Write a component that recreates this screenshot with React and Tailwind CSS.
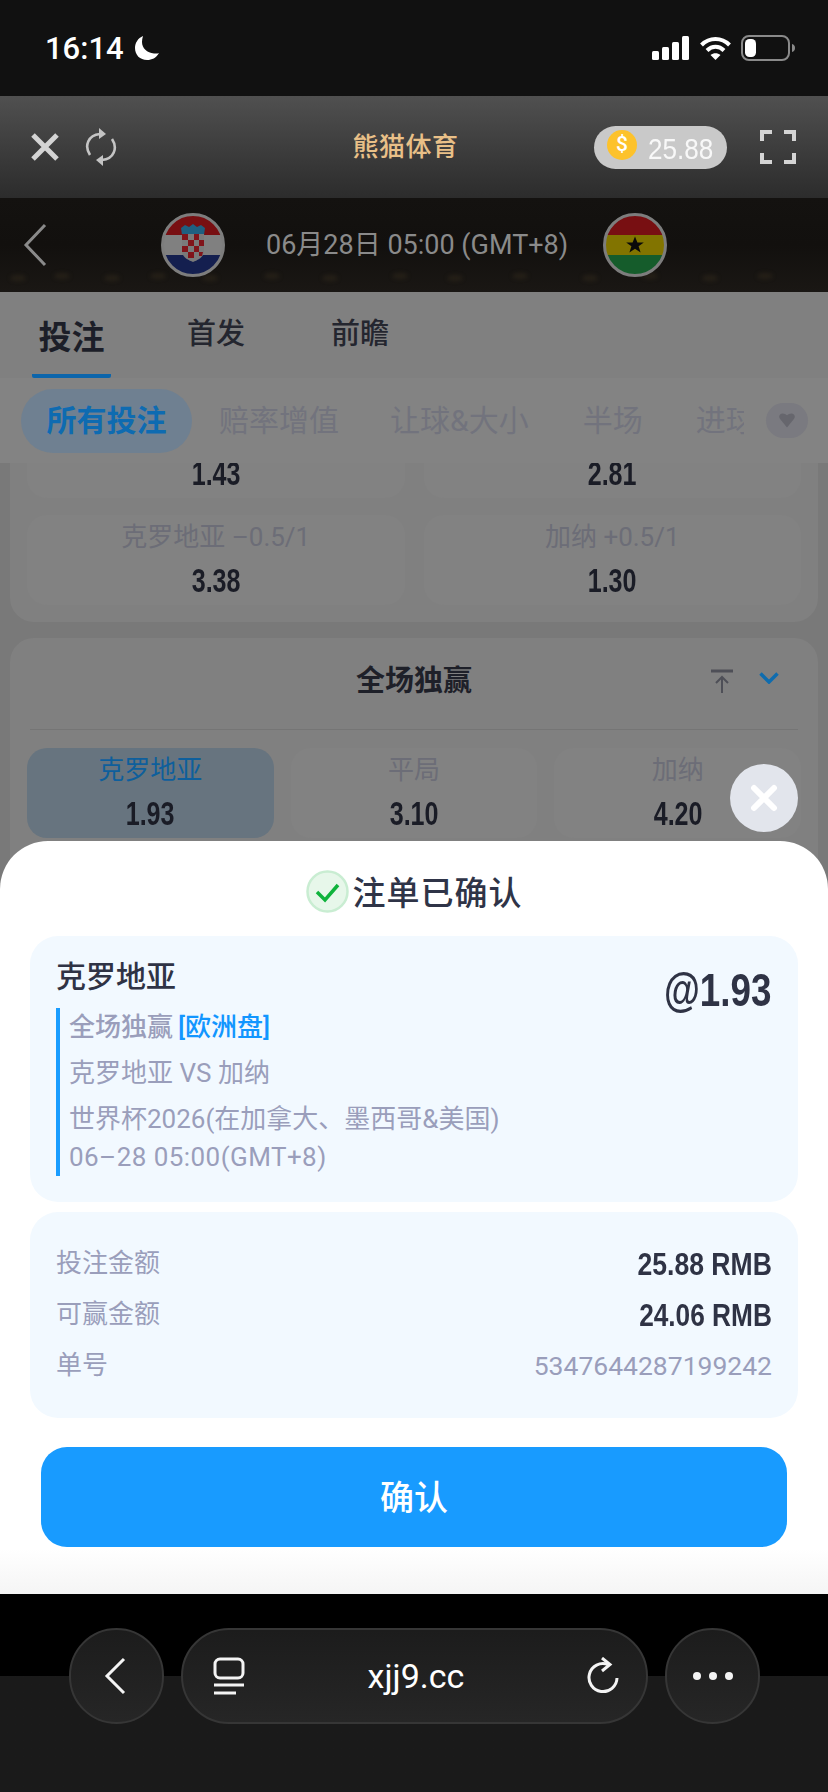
import React from 'react';

const num = "inline-block font-bold font-['Liberation_Sans','Roboto',sans-serif] whitespace-nowrap";

const StatusBar = () => (
  <div className="h-[96px] bg-[#111111] flex items-center justify-between pl-[45px] pr-[33px] text-white">
    <div className="flex items-center gap-[10px]">
      <span className="text-[31px] font-medium leading-none">16:14</span>
      <svg width="26" height="26" viewBox="0 0 26 26" fill="#fff">
        <path d="M9 1C4 3 1 8 1 13c0 7 5 12 12 12 5 0 9-2 12-7-1 .5-3 .8-5 .5C13 18 8 13 8 7c0-2 .4-4 1-6z" />
      </svg>
    </div>
    <div className="flex items-center">
      <svg width="38" height="24" viewBox="0 0 38 24" fill="#fff">
        <rect x="0" y="15" width="7" height="9" rx="1.5" />
        <rect x="10" y="11" width="7" height="13" rx="1.5" />
        <rect x="20" y="6" width="7" height="18" rx="1.5" />
        <rect x="30" y="0" width="7" height="24" rx="1.5" />
      </svg>
      <svg className="ml-[9px]" width="33" height="25" viewBox="0 0 32 25" fill="none" stroke="#fff" strokeWidth="4">
        <path d="M2 9c8-8 20-8 28 0" />
        <path d="M7.500 14.500c5-5 12-5 17 0" />
        <path d="M16 24l-5-5c3-2.500 7-2.500 10 0z" fill="#fff" stroke="none" />
      </svg>
      <svg className="ml-[9px]" width="54" height="26" viewBox="0 0 54 26" fill="none">
        <rect x="1" y="1" width="47" height="24" rx="7" stroke="#8a8a8a" strokeWidth="2" />
        <rect x="4" y="4" width="11" height="18" rx="4.500" fill="#fff" />
        <path d="M51 9c2 .5 3 2 3 4s-1 3.500-3 4z" fill="#8a8a8a" />
      </svg>
    </div>
  </div>
);

const AppHeader = () => (
  <div className="h-[102px] bg-gradient-to-b from-[#505050] to-[#2c2c2c] flex items-center pl-[31px] pr-[32px]">
    <svg width="28" height="28" viewBox="0 0 28 28" stroke="#d4d4d4" strokeWidth="5" fill="none">
      <path d="M2 2l24 24M26 2L2 26" />
    </svg>
    <svg className="ml-[26px]" width="32" height="40" viewBox="0 0 32 40" fill="none" stroke="#c4c4c4" strokeWidth="2.600">
      <path d="M5 28C-1 19 3 8 15 7" />
      <path d="M14 1l7 6-7 5z" fill="#c4c4c4" stroke="none" />
      <path d="M27 12c6 9 2 20-10 21" />
      <path d="M18 28l-7 5 7 6z" fill="#c4c4c4" stroke="none" />
    </svg>
    <div className="flex-1 text-center text-[26px] font-medium text-[#e9c088] tracking-[0.5px] pl-[100px]">熊猫体育</div>
    <div className="w-[133px] h-[43px] rounded-full bg-[#c9c9c9] flex items-center pl-[13px]">
      <div className="w-[30px] h-[30px] rounded-full bg-[#fdc22b] flex items-center justify-center text-white text-[21px] font-medium leading-none -mt-[5px]">$</div>
      <span className="ml-[11px] inline-block origin-left scale-x-[0.87] text-[30px] leading-none text-[#f8f8f8] font-['Liberation_Sans','Roboto',sans-serif] mt-[4px]">25.88</span>
    </div>
    <svg className="ml-[33px]" width="36" height="34" viewBox="0 0 36 34" fill="none" stroke="#d4d4d4" strokeWidth="4">
      <path d="M2 11V2h10M24 2h10v9M34 23v9H24M12 32H2v-9" />
    </svg>
  </div>
);

const CroatiaFlag = () => (
  <svg width="64" height="64" viewBox="0 0 64 64" className="shrink-0">
    <clipPath id="hr"><circle cx="32" cy="32" r="30" /></clipPath>
    <g clipPath="url(#hr)">
      <rect width="64" height="22" fill="#780f12" />
      <rect y="22" width="64" height="20" fill="#808080" />
      <rect y="42" width="64" height="22" fill="#141f4f" />
      <path d="M20 15l4-3 4 2 4-3 4 3 4-2 4 3-1 7H21z" fill="#1f5f80" />
      <path d="M21 21h22v17c0 6-6 9-11 11-5-2-11-5-11-11z" fill="#7a7a7a" />
      <path d="M21 21h6v6h-6zM33 21h5v6h-5zM27 27h6v6h-6zM38 27h5v6h-5zM21 33h6v6h-6zM33 33h5v6h-5zM27 39h6v6h-6zM38 39h4l-1 4h-3z" fill="#80141a" />
    </g>
    <circle cx="32" cy="32" r="30.500" fill="none" stroke="#7d7d7d" strokeWidth="3" />
  </svg>
);

const GhanaFlag = () => (
  <svg width="64" height="64" viewBox="0 0 64 64" className="shrink-0">
    <clipPath id="gh"><circle cx="32" cy="32" r="30" /></clipPath>
    <g clipPath="url(#gh)">
      <rect width="64" height="22" fill="#780f12" />
      <rect y="22" width="64" height="20" fill="#827400" />
      <rect y="42" width="64" height="22" fill="#155c2b" />
    </g>
    <path d="M32 23.500l2.400 6h6.400l-5.200 3.800 2 6.200-5.600-3.800-5.600 3.800 2-6.200-5.200-3.800h6.400z" fill="#0a0a0a" />
    <circle cx="32" cy="32" r="30.500" fill="none" stroke="#7d7d7d" strokeWidth="3" />
  </svg>
);

// blurred stadium lights behind the match row
const lights = [18, 62, 112, 158, 210, 272, 330, 400, 455, 520, 590, 650, 710, 765];

const MatchBar = () => (
  <div className="relative h-[94px] bg-gradient-to-b from-[#141210] via-[#12100e] to-[#1a1714] flex items-center pl-[23px]">
    <svg className="absolute inset-0 blur-[2px]" width="828" height="94" viewBox="0 0 828 94">
      {lights.map((x, i) => (
        <ellipse key={x} cx={x} cy={i % 2 ? 78 : 80} rx="8" ry="3" fill="#4a3d26" opacity="0.3" />
      ))}
    </svg>
    <svg className="relative" width="24" height="44" viewBox="0 0 24 44" fill="none" stroke="#8a8a8a" strokeWidth="3">
      <path d="M22 2L3 22l19 20" />
    </svg>
    <div className="relative ml-[114px]"><CroatiaFlag /></div>
    <span className="relative ml-[41px] w-[337px] text-[27px] text-[#8a8a8a] whitespace-nowrap">06月28日 05:00 (GMT+8)</span>
    <div className="relative"><GhanaFlag /></div>
  </div>
);

const Tabs = () => (
  <div className="h-[86px] bg-[#808080] flex pl-[32px] relative">
    <div className="w-[79px] h-[86px] border-b-[4px] border-[#0c65ab] rounded-b-[2px] flex justify-center pt-[24px]">
      <span className="text-[33px] leading-[44px] font-bold text-[#1c1e28]">投注</span>
    </div>
    <span className="ml-[76px] mt-[20px] text-[29px] leading-[44px] font-medium text-[#24262f]">首发</span>
    <span className="ml-[86px] mt-[20px] text-[29px] leading-[44px] font-medium text-[#24262f]">前瞻</span>
  </div>
);

const Filters = () => (
  <div className="h-[85px] bg-[#838383] flex items-center pl-[21px] text-[30px] text-[#72737d]">
    <div className="w-[171px] h-[64px] rounded-[32px] bg-[#6f8091] flex items-center justify-center font-bold text-[#0e6bb1]">所有投注</div>
    <span className="ml-[27px]">赔率增值</span>
    <span className="ml-[51px]">让球&大小</span>
    <span className="ml-[54px]">半场</span>
    <span className="ml-[53px] w-[48px] overflow-hidden whitespace-nowrap">进球</span>
    <div className="ml-[22px] w-[42px] h-[35px] rounded-full bg-[#7a7a80] flex items-center justify-center">
      <svg width="16" height="15" viewBox="0 0 18 16" fill="#66666d">
        <path d="M9 16L1 6C-1 3 1 0 4 0c2 0 4 1 5 2 1-1 3-2 5-2 3 0 5 3 3 6z" />
      </svg>
    </div>
  </div>
);

const Odds = ({ label, value, active = false }) => (
  <div className={`h-[90px] rounded-[20px] flex flex-col items-center ${active ? 'bg-[#67747f]' : 'bg-[#828282]'}`}>
    <div className={`h-[44px] flex items-center text-[26px] ${active ? 'text-[#0e5f9c]' : 'text-[#6c6d77]'}`}>{label}</div>
    <div className="h-[44px] flex items-center text-[33px] text-[#1a1c26]">
      <span className={`${num} scale-x-[0.76]`}>{value}</span>
    </div>
  </div>
);

const Content = () => (
  <div className="flex-1 bg-[#797979] overflow-hidden">
    <div className="-mt-[73px] mx-[10px] h-[232px] rounded-[24px] bg-[#808080] px-[17px] pt-[18px]">
      <div className="grid grid-cols-2 gap-x-[19px] gap-y-[17px]">
        <Odds label="" value="1.43" />
        <Odds label="" value="2.81" />
        <Odds label="克罗地亚 –0.5/1" value="3.38" />
        <Odds label="加纳 +0.5/1" value="1.30" />
      </div>
    </div>
    <div className="mt-[16px] mx-[10px] h-[300px] rounded-[24px] bg-[#808080] px-[17px]">
      <div className="relative h-[92px] mx-[3px] border-b border-[#757575] flex items-start justify-center pt-[22px]">
        <span className="text-[29px] leading-[42px] font-bold text-[#1e2029]">全场独赢</span>
        <div className="absolute right-[19px] top-[31px] flex items-start gap-[26px]">
          <svg width="22" height="24" viewBox="0 0 22 24" fill="none" stroke="#4e4f57" strokeWidth="2">
            <path d="M0 2h22" strokeWidth="3" />
            <path d="M11 24V8M5 14l6-6 6 6" />
          </svg>
          <svg className="mt-[3px]" width="20" height="12" viewBox="0 0 20 12" fill="none" stroke="#0f6cae" strokeWidth="3.500">
            <path d="M1.500 1.500L10 10l8.500-8.500" />
          </svg>
        </div>
      </div>
      <div className="mt-[18px] grid grid-cols-3 gap-x-[17px]">
        <Odds label="克罗地亚" value="1.93" active />
        <Odds label="平局" value="3.10" />
        <Odds label="加纳" value="4.20" />
      </div>
    </div>
  </div>
);

const Row = ({ label, children }) => (
  <div className="h-[51px] flex items-center justify-between text-[26px] text-[#9a9ebb]">
    <span>{label}</span>
    {children}
  </div>
);

const Sheet = () => (
  <div className="absolute left-0 right-0 bottom-0 rounded-t-[48px] bg-gradient-to-b from-white from-[94%] to-[#f5f5f5] pt-[29px] pb-[47px]">
    <div className="h-[43px] flex items-center justify-center gap-[4px]">
      <svg width="43" height="43" viewBox="0 0 43 43" fill="none">
        <circle cx="21.500" cy="21.500" r="20" fill="#e7f7ea" stroke="#c9edd2" strokeWidth="2.500" />
        <path d="M11 22l8 8 13-15" stroke="#0fb33c" strokeWidth="3.500" />
      </svg>
      <span className="text-[33px] font-medium text-[#2f3447] leading-none tracking-[1px] mt-[3px]">注单已确认</span>
    </div>
    <div className="mt-[23px] mx-[30px] h-[266px] rounded-[28px] bg-[#f2f9ff] flex justify-between pl-[26px] pr-[27px] pt-[25px]">
      <div>
        <div className="h-[30px] flex items-center text-[30px] font-medium text-[#2f3345]">克罗地亚</div>
        <div className="mt-[17px] h-[168px] border-l-[4px] border-[#1a9dff] pl-[9px] text-[26px] text-[#9a9ebb]">
          <div className="h-[38px] flex items-center font-medium">全场独赢<span className="ml-[5px] text-[#1296ff]">[欧洲盘]</span></div>
          <div className="mt-[8px] h-[38px] flex items-center">克罗地亚 VS 加纳</div>
          <div className="mt-[8px] h-[38px] flex items-center">世界杯2026(在加拿大、墨西哥&美国)</div>
          <div className="h-[38px] flex items-center tracking-[0.45px]">06–28 05:00(GMT+8)</div>
        </div>
      </div>
      <div className={`text-[46px] leading-none text-[#2f3345] mt-[6px] origin-right scale-x-[0.8] ${num}`}>@1.93</div>
    </div>
    <div className="mt-[10px] mx-[30px] h-[206px] rounded-[28px] bg-[#f2f9ff] px-[26px] pt-[26px]">
      <Row label="投注金额"><span className={`text-[32px] text-[#2f3345] origin-right scale-x-[0.83] ${num}`}>25.88 RMB</span></Row>
      <Row label="可赢金额"><span className={`text-[32px] text-[#2f3345] origin-right scale-x-[0.82] ${num}`}>24.06 RMB</span></Row>
      <Row label="单号"><span className="text-[26.500px]">5347644287199242</span></Row>
    </div>
    <div className="mt-[29px] mx-[41px] h-[100px] rounded-[26px] bg-[#189bff] flex items-center justify-center text-[34px] font-medium text-white pt-[3px]">确认</div>
  </div>
);

const BrowserBar = () => (
  <div className="h-[198px] bg-gradient-to-b from-black from-[41.500%] to-[#1a1a1a] to-[41.500%] flex items-start pt-[34px] pl-[69px] gap-[17px]">
    <div className="w-[95px] h-[96px] rounded-full border-2 border-[#363636] bg-gradient-to-b from-[#1c1c1c] to-[#262626] flex items-center justify-center pr-[4px]">
      <svg width="22" height="38" viewBox="0 0 22 38" fill="none" stroke="#f4f4f4" strokeWidth="3">
        <path d="M20 2L3 19l17 17" />
      </svg>
    </div>
    <div className="w-[467px] h-[96px] rounded-full border-2 border-[#363636] bg-gradient-to-b from-[#1c1c1c] to-[#262626] flex items-center justify-between pl-[30px] pr-[27px]">
      <svg width="32" height="38" viewBox="0 0 32 38" fill="none" stroke="#f4f4f4" strokeWidth="3">
        <rect x="2" y="2" width="28" height="19" rx="5" />
        <path d="M1 28h30M1 36h22" />
      </svg>
      <span className="text-[34px] text-white leading-none">xjj9.cc</span>
      <svg width="32" height="38" viewBox="0 0 32 38" fill="none" stroke="#f4f4f4" strokeWidth="3">
        <path d="M21 7.500A14 14 0 1 0 30 21" />
        <path d="M15 1l8 6.500-8 6.500" />
      </svg>
    </div>
    <div className="w-[95px] h-[96px] rounded-full border-2 border-[#363636] bg-gradient-to-b from-[#1c1c1c] to-[#262626] flex items-center justify-center gap-[8px]">
      <span className="w-[8px] h-[8px] rounded-full bg-[#f4f4f4]" />
      <span className="w-[8px] h-[8px] rounded-full bg-[#f4f4f4]" />
      <span className="w-[8px] h-[8px] rounded-full bg-[#f4f4f4]" />
    </div>
  </div>
);

const App = () => {
  return (
    <div className="w-[828px] h-[1792px] flex flex-col overflow-hidden font-['Roboto','Noto_Sans_CJK_SC',sans-serif]">
      <StatusBar />
      <AppHeader />
      <div className="relative h-[1396px] flex flex-col overflow-hidden">
        <MatchBar />
        <Tabs />
        <Filters />
        <Content />
        <Sheet />
        <div className="absolute left-[730px] top-[566px] w-[68px] h-[68px] rounded-full bg-[#e2e5ec] flex items-center justify-center">
          <svg width="28" height="28" viewBox="0 0 28 28" stroke="#fff" strokeWidth="6" strokeLinecap="round" fill="none">
            <path d="M4 4l20 20M24 4L4 24" />
          </svg>
        </div>
      </div>
      <BrowserBar />
    </div>
  );
};

export default App;
